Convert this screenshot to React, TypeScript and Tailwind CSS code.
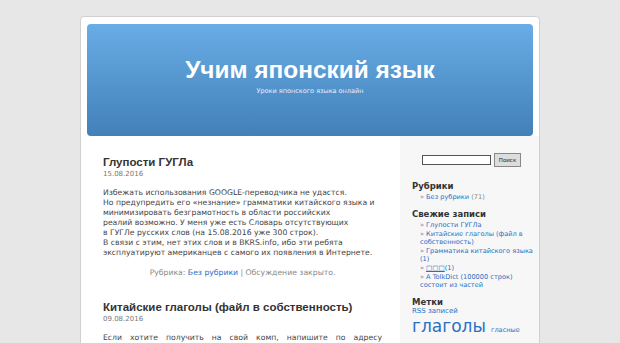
const body = "font-['DejaVu_Sans',sans-serif]";
const head = "font-['Liberation_Sans',sans-serif]";

function Post({ title, date, children }: { title: string; date: string; children: React.ReactNode }) {
  return (
    <div className="mb-[22px]">
      <h2 className={`${head} text-[11.5px] leading-[14px] font-bold text-[#333] whitespace-nowrap`}>{title}</h2>
      <div className={`${body} text-[7px] leading-[9px] text-[#777] mt-[1px]`}>{date}</div>
      <div className={`${body} text-[7.7px] leading-[10px] text-[#444] mt-[9px]`}>{children}</div>
    </div>
  );
}

function Widget({ title, children }: { title: string; children: React.ReactNode }) {
  return (
    <div className="mb-[8px]">
      <h3 className="text-[8.5px] leading-[10px] font-bold text-[#333]">{title}</h3>
      <ul className="mt-[2px] pl-[8px]">{children}</ul>
    </div>
  );
}

function Item({ children }: { children: React.ReactNode }) {
  return (
    <li className="text-[6.6px] leading-[8px] text-[#2a6fc4] mb-[1px] whitespace-nowrap">
      <span className="text-[#888] mr-[2px]">»</span>
      {children}
    </li>
  );
}

export default function App() {
  return (
    <div className="min-h-screen bg-[#e7e7e7] pt-[16px]">
      <div className="mx-auto w-[460px] bg-white border border-[#d0d0d0] rounded-[4px] pt-[7px]">
        <div className="mx-[6px] h-[112px] rounded-[4px] bg-gradient-to-b from-[#69ade6] to-[#4280b8] flex flex-col items-center justify-center pb-[9px]">
          <h1 className={`${head} text-[24.4px] leading-[26px] font-bold text-white`}>Учим японский язык</h1>
          <div className={`${body} text-[6.5px] leading-[8px] text-[#e6f0fa] mt-[4px]`}>Уроки японского языка онлайн</div>
        </div>
        <div className="flex">
          <main className="w-[319px] pl-[22px] pr-[18px] pt-[19px] h-[210px] overflow-hidden">
            <Post title="Глупости ГУГЛа" date="15.08.2016">
              <p>Избежать использования GOOGLE-переводчика не удастся.</p>
              <p>Но предупредить его «незнание» грамматики китайского языка и</p>
              <p>минимизировать безграмотность в области российских</p>
              <p>реалий возможно. У меня уже есть Словарь отсутствующих</p>
              <p>в ГУГЛе русских слов (на 15.08.2016 уже 300 строк).</p>
              <p>В связи с этим, нет этих слов и в BKRS.info, ибо эти ребята</p>
              <p>эксплуатируют американцев с самого их появления в Интернете.</p>
              <p className="text-center text-[#888] mt-[10px]">
                Рубрика: <span className="text-[#2a6fc4]">Без рубрики</span> | Обсуждение закрыто.
              </p>
            </Post>
            <Post title="Китайские глаголы (файл в собственность)" date="09.08.2016">
              <p className="text-justify [text-align-last:justify]">Если хотите получить на свой комп, напишите по адресу</p>
              <p>tolkdict@gmail.com</p>
            </Post>
          </main>
          <aside className={`${body} flex-1 bg-[#f7f7f7] pl-[12px] pr-[6px] pt-[17px] h-[210px] overflow-hidden`}>
            <div className="flex items-center pl-[10px] mb-[14px]">
              <input className="w-[69px] h-[10px] border border-[#555] bg-white" />
              <button className="ml-[3px] w-[27px] h-[14px] border border-[#888] bg-[#ddd] text-[5.5px] text-[#222]">Поиск</button>
            </div>
            <Widget title="Рубрики">
              <Item>
                Без рубрики <span className="text-[#888]">(71)</span>
              </Item>
            </Widget>
            <Widget title="Свежие записи">
              <Item>Глупости ГУГЛа</Item>
              <Item>
                Китайские глаголы (файл в<br />собственность)
              </Item>
              <Item>
                Грамматика китайского языка
                <br />
                (1)
              </Item>
              <Item>
                <span className="underline">□□□</span>(1)
              </Item>
              <Item>
                A TolkDict (100000 строк)
                <br />
                состоит из частей
              </Item>
            </Widget>
            <div>
              <h3 className="text-[8.5px] leading-[10px] font-bold text-[#333]">Метки</h3>
              <div className="text-[#2a6fc4] leading-none">
                <div className="text-[7px] leading-[9px]">RSS записей</div>
                <div className="leading-[19px] whitespace-nowrap mt-[1px]">
                  <span className="text-[17px] font-medium">глаголы</span> <span className="text-[6.6px]">гласные</span>
                </div>
                <div className="leading-[14px] whitespace-nowrap">
                  <span className="text-[6.6px]">глухие</span> <span className="text-[11.5px] font-medium">годзюон</span>{" "}
                  <span className="text-[6.6px]">звонкие</span>
                </div>
              </div>
            </div>
          </aside>
        </div>
      </div>
    </div>
  );
}
